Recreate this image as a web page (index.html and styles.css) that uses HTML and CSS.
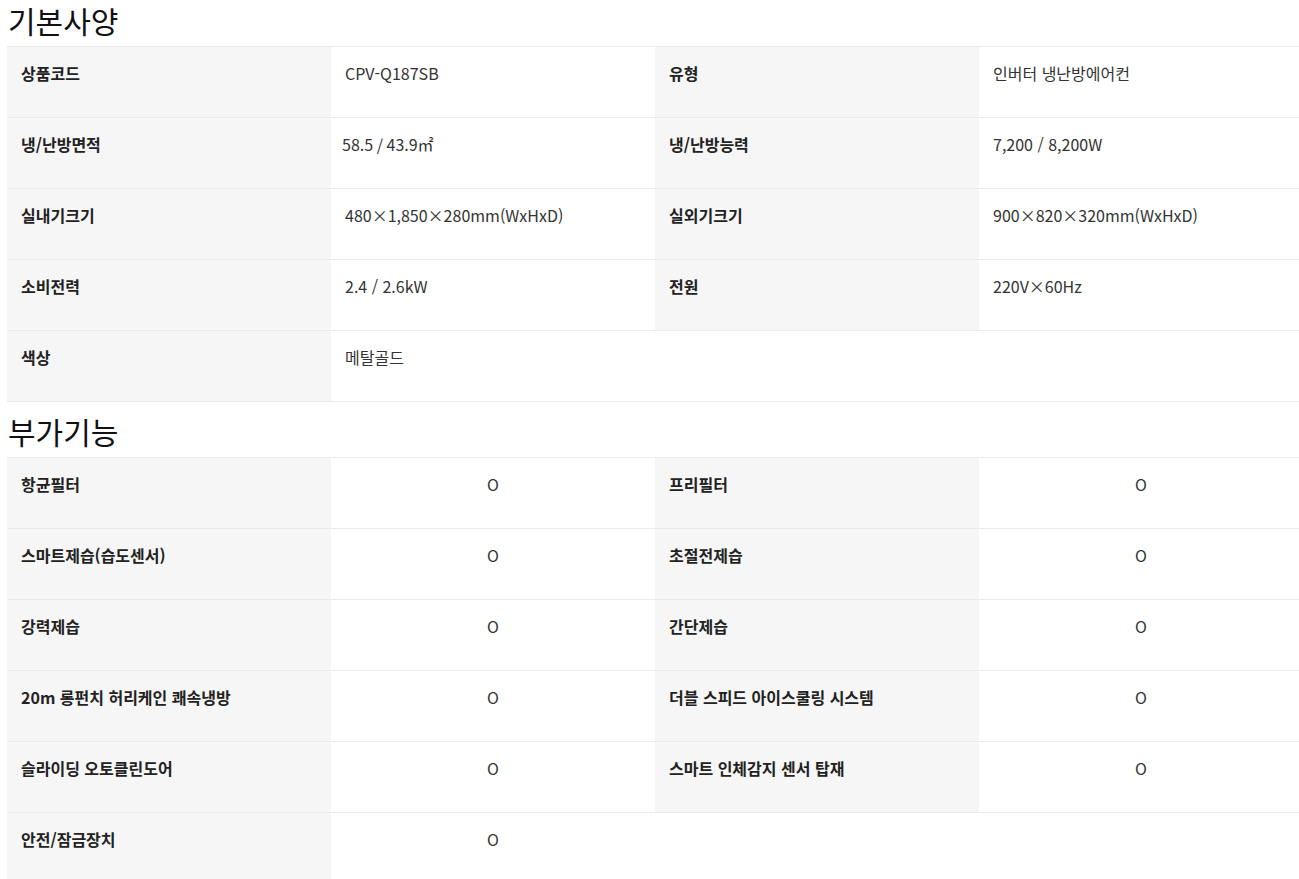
FILE: index.html
```html
<!DOCTYPE html>
<html lang="ko">
<head>
<meta charset="utf-8">
<title>기본사양</title>
<link rel="stylesheet" href="styles.css">
</head>
<body>
<div class="page">
  <section class="section">
    <h2 class="title">기본사양</h2>
    <table class="spec">
      <tr><th>상품코드</th><td>CPV-Q187SB</td><th>유형</th><td>인버터 냉난방에어컨</td></tr>
      <tr><th>냉/난방면적</th><td class="tight">58.5 / 43.9㎡</td><th>냉/난방능력</th><td>7,200 / 8,200W</td></tr>
      <tr><th>실내기크기</th><td>480×1,850×280mm(WxHxD)</td><th>실외기크기</th><td>900×820×320mm(WxHxD)</td></tr>
      <tr><th>소비전력</th><td>2.4 / 2.6kW</td><th>전원</th><td>220V×60Hz</td></tr>
      <tr><th>색상</th><td>메탈골드</td><td class="empty" colspan="2"></td></tr>
    </table>
  </section>
  <section class="section second">
    <h2 class="title">부가기능</h2>
    <table class="spec center">
      <tr><th>항균필터</th><td>O</td><th>프리필터</th><td>O</td></tr>
      <tr><th>스마트제습(습도센서)</th><td>O</td><th>초절전제습</th><td>O</td></tr>
      <tr><th>강력제습</th><td>O</td><th>간단제습</th><td>O</td></tr>
      <tr><th>20m 롱펀치 허리케인 쾌속냉방</th><td>O</td><th>더블 스피드 아이스쿨링 시스템</th><td>O</td></tr>
      <tr><th>슬라이딩 오토클린도어</th><td>O</td><th>스마트 인체감지 센서 탑재</th><td>O</td></tr>
      <tr><th>안전/잠금장치</th><td>O</td><td class="empty" colspan="2"></td></tr>
    </table>
  </section>
</div>
</body>
</html>
```

FILE: styles.css
```css
html, body {
  margin: 0;
  padding: 0;
  background: #fff;
  overflow: hidden;
}
body {
  font-family: "Noto Sans CJK KR", "Noto Sans", sans-serif;
  color: #222;
}
.page {
  padding-left: 7px;
}
.title {
  margin: 0 0 6px 1px;
  font-size: 30px;
  font-weight: 400;
  line-height: 40px;
  color: #111;
}
.second {
  margin-top: 9px;
}
.spec {
  border-collapse: collapse;
  width: 1296px;
  table-layout: fixed;
  border-bottom: 1px solid #ebebeb;
}
.spec tr {
  border-top: 1px solid #ebebeb;
}
.spec th,
.spec td {
  width: 324px;
  height: 71px;
  box-sizing: border-box;
  padding: 14px 14px 0;
  vertical-align: top;
  text-align: left;
  font-size: 16px;
  line-height: 24px;
}
.spec th {
  background: #f6f6f6;
  font-weight: 700;
  color: #222;
}
.spec td {
  background: #fff;
  font-weight: 400;
  color: #333;
}
.spec td.tight {
  padding-left: 11px;
}
.center td {
  text-align: center;
}
```
